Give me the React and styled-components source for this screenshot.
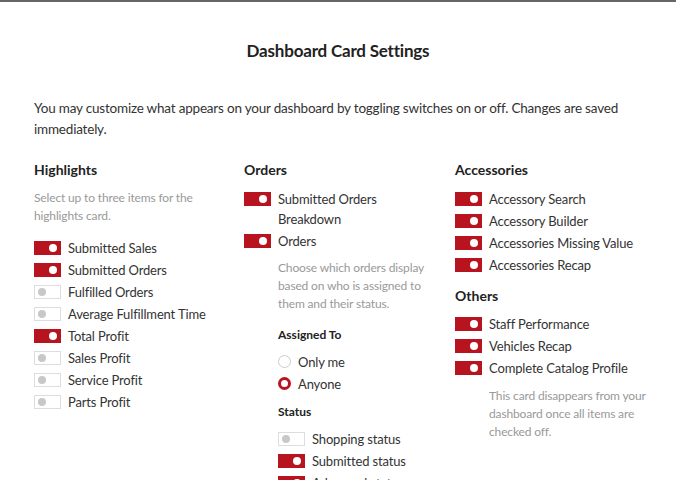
import styled, { createGlobalStyle } from 'styled-components'

const GlobalStyle = createGlobalStyle`
  html, body {
    margin: 0;
    padding: 0;
    background: #fff;
  }
  body {
    font-family: Lato, "Liberation Sans", sans-serif;
    color: #333;
  }
`

const Page = styled.div`
  border-top: 2px solid #666;
  padding: 0 10px 0 34px;
`
const Title = styled.h2`
  margin: 0;
  padding-top: 38px;
  text-align: center;
  font-size: 17px;
  font-weight: 700;
  letter-spacing: -0.2px;
  color: #222;
  padding-right: 24px;
`
const Intro = styled.p`
  margin: 37px 0 0;
  font-size: 13.5px;
  letter-spacing: -0.2px;
  line-height: 21px;
  padding-right: 30px;
`
const Columns = styled.div`
  display: grid;
  grid-template-columns: 210px 211px 1fr;
  margin-top: 20px;
`
const Column = styled.div`
  display: flex;
  flex-direction: column;
`
const Heading = styled.h3`
  margin: ${(p) => p.$top || 0}px 0 ${(p) => p.$gap || 12}px;
  font-size: 14px;
  line-height: 20px;
  font-weight: 700;
  color: #222;
`
const SubHeading = styled.h4`
  margin: ${(p) => p.$top || 0}px 0 ${(p) => p.$gap || 8}px 34px;
  font-size: 12px;
  line-height: 18px;
  font-weight: 700;
  color: #222;
`
const Note = styled.p`
  margin: ${(p) => p.$top || 0}px 0 ${(p) => p.$gap || 0}px ${(p) => (p.$indent ? 34 : 0)}px;
  font-size: 12px;
  letter-spacing: -0.15px;
  line-height: 18px;
  color: #999;
  max-width: ${(p) => p.$width || 160}px;
`
const List = styled.div`
  display: flex;
  flex-direction: column;
  margin-left: ${(p) => (p.$indent ? 34 : 0)}px;
`
const Row = styled.label`
  display: flex;
  align-items: flex-start;
  gap: 7px;
  font-size: 13px;
  letter-spacing: -0.15px;
  line-height: 20px;
  padding: 1px 0;
  color: #333;
`
const Track = styled.span`
  position: relative;
  flex: none;
  width: 27px;
  height: 14px;
  margin-top: 3px;
  box-sizing: border-box;
  background: ${(p) => (p.$on ? '#b8141f' : '#fff')};
  border: 1px solid ${(p) => (p.$on ? '#b8141f' : '#ddd')};
`
const Knob = styled.span`
  position: absolute;
  top: 2px;
  left: ${(p) => (p.$on ? 14 : 3)}px;
  width: 8px;
  height: 8px;
  border-radius: 50%;
  background: ${(p) => (p.$on ? '#fff' : '#c8c8c8')};
`
const Radio = styled.span`
  flex: none;
  width: 13px;
  height: 13px;
  margin-top: 3px;
  box-sizing: border-box;
  border-radius: 50%;
  border: ${(p) => (p.$on ? '3.5px solid #b8141f' : '1px solid #ccc')};
  background: #fff;
`

function Toggle({ on, children }) {
  return (
    <Row>
      <Track $on={on}>
        <Knob $on={on} />
      </Track>
      <span>{children}</span>
    </Row>
  )
}

function Choice({ on, children }) {
  return (
    <Row>
      <Radio $on={on} />
      <span>{children}</span>
    </Row>
  )
}

const highlights = [
  ['Submitted Sales', true],
  ['Submitted Orders', true],
  ['Fulfilled Orders', false],
  ['Average Fulfillment Time', false],
  ['Total Profit', true],
  ['Sales Profit', false],
  ['Service Profit', false],
  ['Parts Profit', false],
]

const statuses = [
  ['Shopping status', false],
  ['Submitted status', true],
  ['Advanced status', true],
]

const accessories = [
  'Accessory Search',
  'Accessory Builder',
  'Accessories Missing Value',
  'Accessories Recap',
]

const others = ['Staff Performance', 'Vehicles Recap', 'Complete Catalog Profile']

export default function App() {
  return (
    <>
      <GlobalStyle />
      <Page>
        <Title>Dashboard Card Settings</Title>
        <Intro>
          You may customize what appears on your dashboard by toggling switches on or off. Changes
          are saved immediately.
        </Intro>
        <Columns>
          <Column>
            <Heading $gap={9}>Highlights</Heading>
            <Note $gap={12} $width={175}>
              Select up to three items for the highlights card.
            </Note>
            <List>
              {highlights.map(([label, on]) => (
                <Toggle key={label} on={on}>
                  {label}
                </Toggle>
              ))}
            </List>
          </Column>
          <Column>
            <Heading $gap={8}>Orders</Heading>
            <List>
              <Toggle on>
                Submitted Orders
                <br />
                Breakdown
              </Toggle>
              <Toggle on>Orders</Toggle>
            </List>
            <Note $indent $top={7} $width={150}>
              Choose which orders display based on who is assigned to them and their status.
            </Note>
            <SubHeading $top={13} $gap={7}>Assigned To</SubHeading>
            <List $indent>
              <Choice>Only me</Choice>
              <Choice on>Anyone</Choice>
            </List>
            <SubHeading $top={8} $gap={7}>Status</SubHeading>
            <List $indent>
              {statuses.map(([label, on]) => (
                <Toggle key={label} on={on}>
                  {label}
                </Toggle>
              ))}
            </List>
          </Column>
          <Column>
            <Heading $gap={8}>Accessories</Heading>
            <List>
              {accessories.map((label) => (
                <Toggle key={label} on>
                  {label}
                </Toggle>
              ))}
            </List>
            <Heading $top={10} $gap={7}>
              Others
            </Heading>
            <List>
              {others.map((label) => (
                <Toggle key={label} on>
                  {label}
                </Toggle>
              ))}
            </List>
            <Note $indent $top={8} $width={165}>
              This card disappears from your dashboard once all items are checked off.
            </Note>
          </Column>
        </Columns>
      </Page>
    </>
  )
}
